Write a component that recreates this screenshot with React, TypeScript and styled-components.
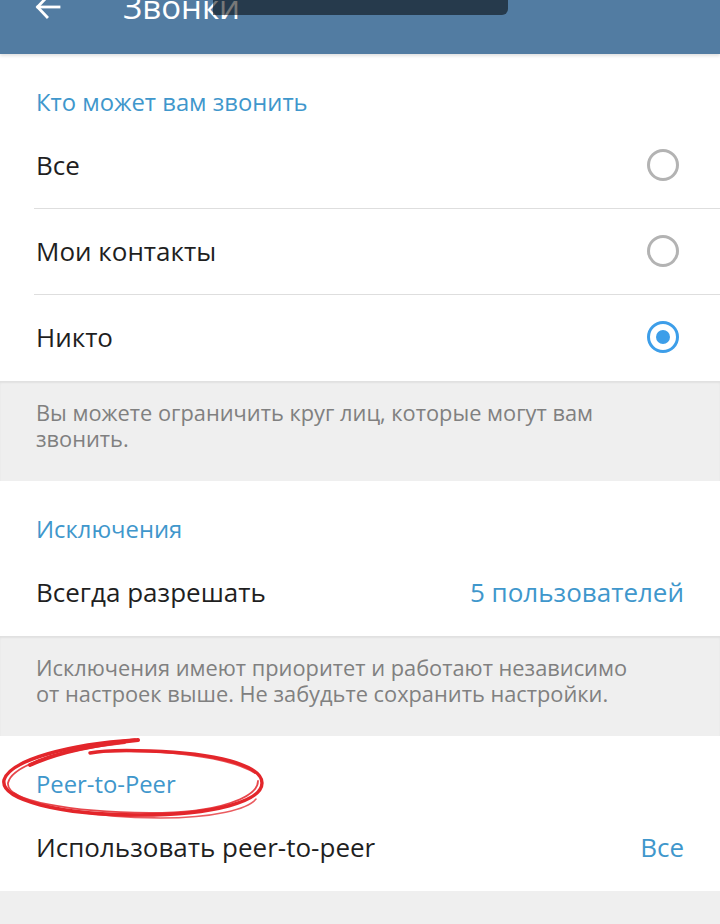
import React from 'react';
import styled, { createGlobalStyle } from 'styled-components';

const GlobalStyle = createGlobalStyle`
  html, body {
    margin: 0;
    padding: 0;
    background: #efefef;
  }
  body {
    font-family: 'Open Sans', 'Liberation Sans', sans-serif;
    -webkit-font-smoothing: antialiased;
  }
`;

const Page = styled.div`
  width: 720px;
  height: 924px;
  overflow: hidden;
  background: #efefef;
`;

const Header = styled.header`
  position: relative;
  height: 54px;
  background: #527ca2;
  display: flex;
  align-items: flex-start;
  overflow: hidden;
  box-shadow: 0 2px 3px rgba(0, 0, 0, 0.12);
  z-index: 2;
`;

const BackButton = styled.div`
  width: 123px;
  padding-left: 35px;
  margin-top: -6px;
  box-sizing: border-box;
  flex-shrink: 0;
`;

const Title = styled.h1`
  margin: -15px 0 0;
  font-size: 33px;
  font-weight: 500;
  line-height: 44px;
  color: #fff;
`;

const Toast = styled.div`
  position: absolute;
  top: 0;
  left: 213px;
  width: 295px;
  height: 15px;
  background: rgba(0, 0, 0, 0.53);
  border-bottom-right-radius: 6px;
`;

const Section = styled.section`
  position: relative;
  background: #fff;
`;

const SectionTitle = styled.div`
  position: relative;
  height: 69px;
  box-sizing: border-box;
  padding: 33px 36px 0;
  font-size: 23.8px;
  line-height: 30px;
  color: #3f97cc;
`;

const Row = styled.div<{ divider?: boolean }>`
  height: 86px;
  display: flex;
  align-items: center;
  justify-content: space-between;
  padding: 0 36px 2px;
  box-sizing: border-box;
  position: relative;

  &::after {
    content: '';
    display: ${(p) => (p.divider ? 'block' : 'none')};
    position: absolute;
    left: 34px;
    right: 0;
    bottom: 0;
    height: 1px;
    background: #dedede;
  }
`;

const Label = styled.span`
  font-size: 26px;
  color: #1f1f1f;
`;

const Value = styled.span`
  font-size: 26px;
  color: #3f97cc;
`;

const Radio = styled.span<{ checked?: boolean }>`
  width: 32px;
  height: 32px;
  margin-right: 5px;
  box-sizing: border-box;
  border-radius: 50%;
  border: 3px solid ${(p) => (p.checked ? '#3d9ee9' : '#b3b3b3')};
  display: flex;
  align-items: center;
  justify-content: center;

  &::before {
    content: '';
    display: ${(p) => (p.checked ? 'block' : 'none')};
    width: 14px;
    height: 14px;
    border-radius: 50%;
    background: #3d9ee9;
  }
`;

const Info = styled.div`
  height: 100px;
  box-sizing: border-box;
  padding: 19px 72px 0 36px;
  font-size: 21.8px;
  line-height: 25.5px;
  color: #808080;
  background: #efefef;
  box-shadow: inset 0 2px 2px rgba(0, 0, 0, 0.06);
`;

const Scribble = styled.svg`
  position: absolute;
  left: 0;
  top: -1px;
  pointer-events: none;
`;

function RedCircle() {
  return (
    <Scribble width="270" height="90" viewBox="0 0 270 90">
      <g fill="none" stroke="#e3262b" strokeLinecap="round">
        <path d="M135 5 C 70 9, 10 25, 4 45 C 0 65, 60 80, 140 80 C 215 80, 262 66, 262 48 C 262 30, 215 18, 150 16 C 125 15, 105 15, 90 18" strokeWidth="3.4" />
        <path d="M125 8 C 60 15, 12 30, 8 48 C 6 66, 70 77, 150 78 C 220 78, 258 62, 258 46" strokeWidth="1.8" opacity="0.85" />
        <path d="M14 58 C 35 72, 90 82, 160 83 C 215 83, 248 74, 256 64" strokeWidth="1.6" opacity="0.75" />
        <path d="M30 30 C 60 16, 100 9, 138 5" strokeWidth="4" />
        <path d="M100 17 C 160 13, 230 22, 255 38" strokeWidth="2" opacity="0.8" />
      </g>
    </Scribble>
  );
}

export default function App() {
  return (
    <Page>
      <GlobalStyle />
      <Header>
        <BackButton>
          <svg width="26" height="26" viewBox="0 0 26 26" fill="none" stroke="#fff" strokeWidth="2.8" strokeLinecap="square">
            <path d="M24 13H3" />
            <path d="M12 3L2.5 13L12 23" />
          </svg>
        </BackButton>
        <Title>Звонки</Title>
        <Toast />
      </Header>

      <Section>
        <SectionTitle>Кто может вам звонить</SectionTitle>
        <Row divider>
          <Label>Все</Label>
          <Radio />
        </Row>
        <Row divider>
          <Label>Мои контакты</Label>
          <Radio />
        </Row>
        <Row>
          <Label>Никто</Label>
          <Radio checked />
        </Row>
      </Section>
      <Info>Вы можете ограничить круг лиц, которые могут вам звонить.</Info>

      <Section>
        <SectionTitle>Исключения</SectionTitle>
        <Row>
          <Label>Всегда разрешать</Label>
          <Value>5 пользователей</Value>
        </Row>
      </Section>
      <Info>
        Исключения имеют приоритет и работают независимо от настроек выше. Не забудьте сохранить настройки.
      </Info>

      <Section>
        <SectionTitle>
          <RedCircle />
          Peer-to-Peer
        </SectionTitle>
        <Row>
          <Label>Использовать peer-to-peer</Label>
          <Value>Все</Value>
        </Row>
      </Section>
    </Page>
  );
}
